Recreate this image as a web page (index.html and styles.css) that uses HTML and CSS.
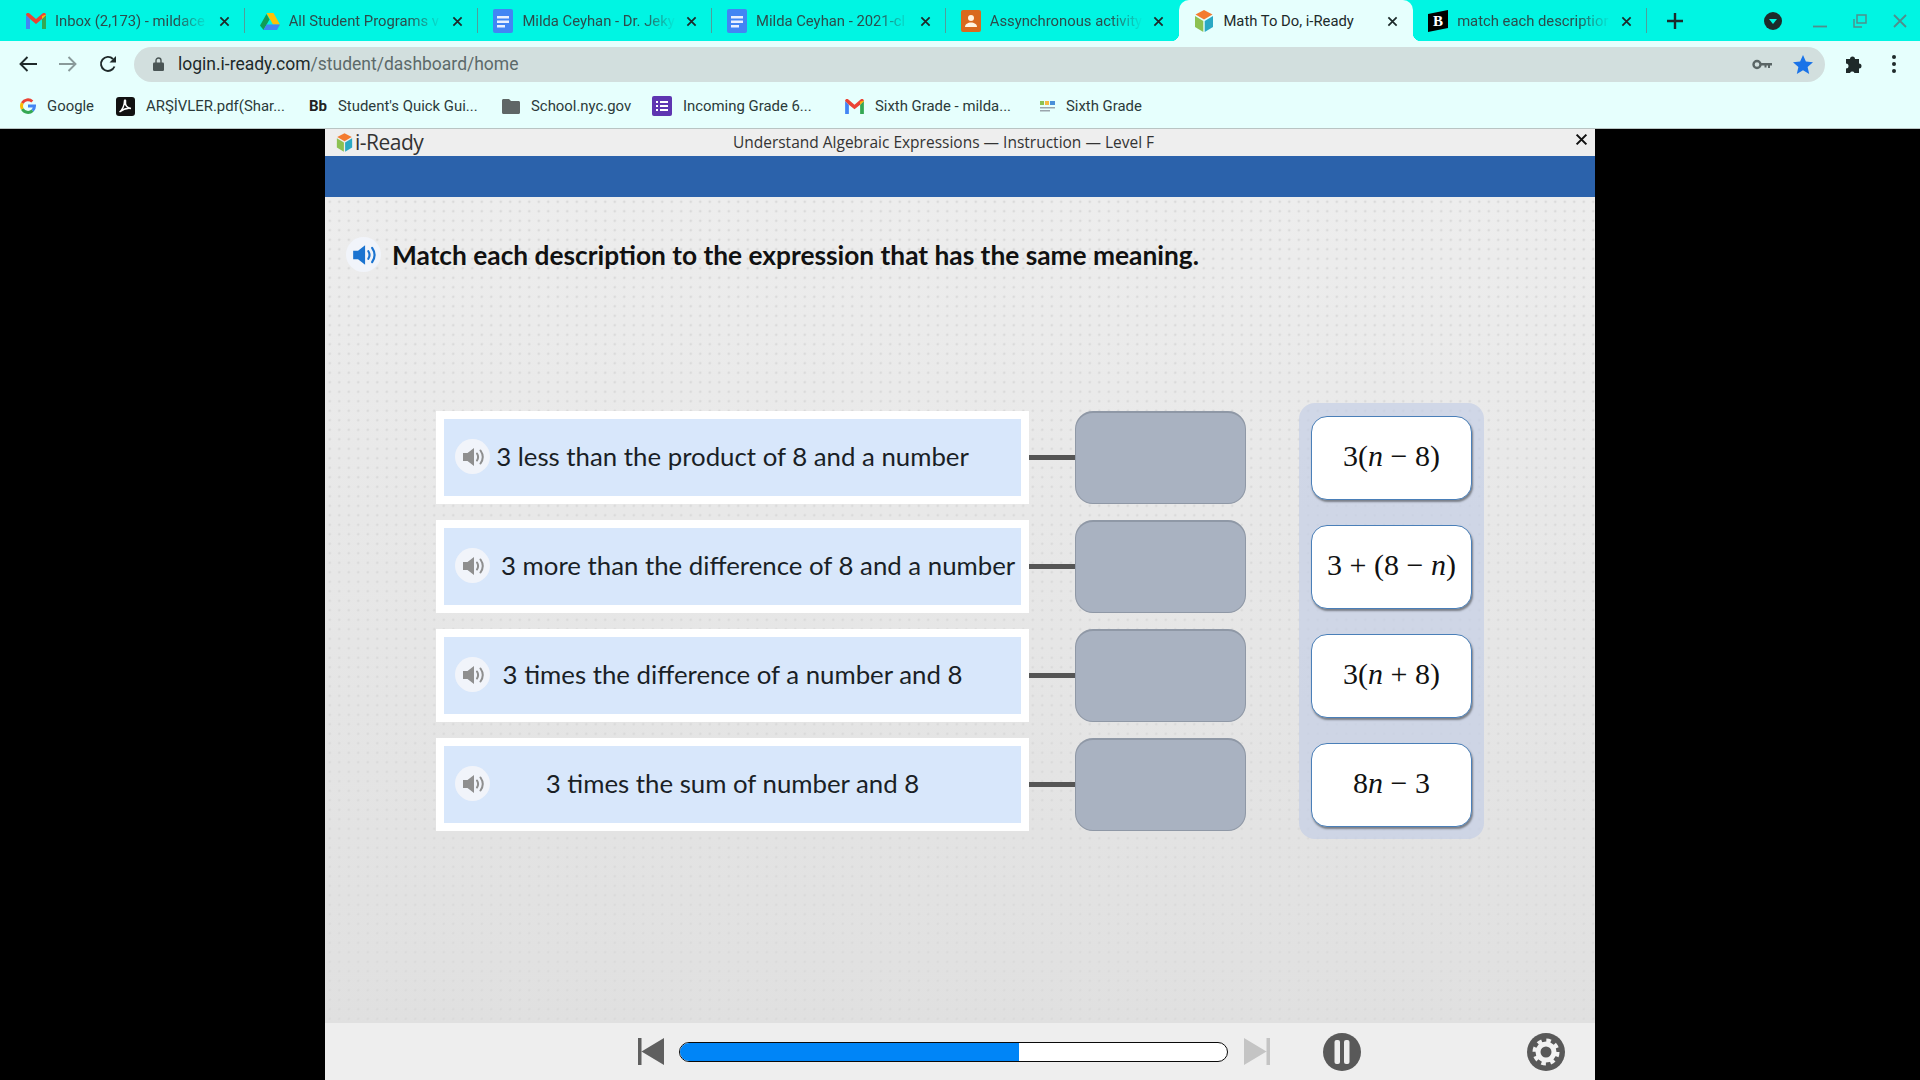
FILE: index.html
```html
<!DOCTYPE html>
<html lang="en">
<head>
    <meta charset="utf-8" />
    <title>Math To Do, i-Ready</title>
    <link rel="stylesheet" href="styles.css">
</head>
<body>
    <svg class="sprites" width="0" height="0">
        <symbol id="speaker" viewBox="0 0 24 24">
            <path fill="currentColor" d="M2 8h4.500L13 3v18l-6.500-5H2z" />
            <path fill="none" stroke="currentColor" stroke-width="2" stroke-linecap="round" d="M16 8.500c1.400 2.200 1.400 4.800 0 7M19.500 5.500c2.800 4 2.800 9 0 13" />
        </symbol>
        <symbol id="close" viewBox="0 0 12 12">
            <path fill="none" stroke="currentColor" stroke-width="1.900" d="M1.500 1.500l9 9M10.500 1.500l-9 9" />
        </symbol>
        <symbol id="doc" viewBox="0 0 20 24">
            <rect width="20" height="24" rx="2" fill="#4285f4" />
            <path fill="#e8f0fe" d="M4 7h12v2.400H4zM4 11.500h12v2.400H4zM4 16h8v2.400H4z" />
        </symbol>
        <symbol id="gmail" viewBox="0 0 20 16">
            <path fill="#4285f4" d="M0 16h4V6L0 2z" />
            <path fill="#34a853" d="M16 16h4V2l-4 4z" />
            <path fill="#ea4335" d="M0 2c0-2 2-2.500 3.500-1.500L10 6l6.500-5.500C18-.5 20 0 20 2l-4 4-6 5-6-5z" />
            <path fill="#fbbc04" d="M16 6l4-4v-.5L16 3z" />
        </symbol>
        <symbol id="cube" viewBox="0 0 20 22">
            <path fill="#f47b30" d="M10 0l8.500 4.500L10 9.500 1.500 4.500z" />
            <path fill="#8cc152" d="M1 6l8.300 5v11L1 17z" />
            <path fill="#2aa9c4" d="M19 6l-8.300 5v11l8.300-5z" />
        </symbol>
    </svg>

    <header class="tabstrip">
        <div class="tab">
            <svg class="favicon" width="20" height="16"><use href="#gmail" /></svg>
            <span class="tab-title">Inbox (2,173) - mildace</span>
            <svg class="tab-close" width="11" height="11"><use href="#close" /></svg>
        </div>
        <div class="tab">
            <svg class="favicon" width="20" height="18" viewBox="0 0 20 18">
                <path fill="#0f9d58" d="M0 13.500L6.500 2l3 5.500L3.500 18z" />
                <path fill="#ffc107" d="M6.500 1h7l6.500 11.500h-7z" />
                <path fill="#4285f4" d="M3.500 18l3-5.500H20L17 18z" />
            </svg>
            <span class="tab-title">All Student Programs v</span>
            <svg class="tab-close" width="11" height="11"><use href="#close" /></svg>
        </div>
        <div class="tab">
            <svg class="favicon" width="20" height="24"><use href="#doc" /></svg>
            <span class="tab-title">Milda Ceyhan - Dr. Jeky</span>
            <svg class="tab-close" width="11" height="11"><use href="#close" /></svg>
        </div>
        <div class="tab">
            <svg class="favicon" width="20" height="24"><use href="#doc" /></svg>
            <span class="tab-title">Milda Ceyhan - 2021-cl</span>
            <svg class="tab-close" width="11" height="11"><use href="#close" /></svg>
        </div>
        <div class="tab tab-nosep">
            <svg class="favicon" width="20" height="22" viewBox="0 0 20 22">
                <rect width="20" height="22" rx="2" fill="#d9691e" />
                <circle cx="10" cy="8" r="3" fill="#fff3e0" />
                <path fill="#fff3e0" d="M4 17c0-3 3-4.500 6-4.500s6 1.500 6 4.500z" />
            </svg>
            <span class="tab-title">Assynchronous activity</span>
            <svg class="tab-close" width="11" height="11"><use href="#close" /></svg>
        </div>
        <div class="tab tab-active">
            <svg class="favicon" width="20" height="22"><use href="#cube" /></svg>
            <span class="tab-title">Math To Do, i-Ready</span>
            <svg class="tab-close" width="11" height="11"><use href="#close" /></svg>
        </div>
        <div class="tab">
            <svg class="favicon" width="20" height="22" viewBox="0 0 20 22">
                <path fill="#000" d="M0 4l20-4v18L0 22z" />
                <text x="5" y="16" class="brand-b">B</text>
            </svg>
            <span class="tab-title">match each descriptior</span>
            <svg class="tab-close" width="11" height="11"><use href="#close" /></svg>
        </div>
        <svg class="new-tab" width="16" height="16" viewBox="0 0 16 16">
            <path stroke="#1c2b2b" stroke-width="2.400" d="M8 0v16M0 8h16" />
        </svg>
        <div class="window-controls">
            <svg class="win-menu" width="18" height="18" viewBox="0 0 18 18">
                <circle cx="9" cy="9" r="9" fill="#1d2a2a" />
                <path fill="#00f5e3" d="M5 7h8l-4 5z" />
            </svg>
            <svg class="win-min" width="14" height="14" viewBox="0 0 14 14">
                <path stroke="#4f8f8c" stroke-width="1.800" d="M0 12.500h14" />
            </svg>
            <svg width="14" height="14" viewBox="0 0 14 14">
                <path fill="none" stroke="#4f8f8c" stroke-width="1.500" d="M4 1h9v8H4zM1 5v8h8" />
            </svg>
            <svg width="14" height="14" viewBox="0 0 14 14">
                <path stroke="#4f8f8c" stroke-width="1.800" d="M1 1l12 12M13 1L1 13" />
            </svg>
        </div>
    </header>

    <nav class="toolbar">
        <svg class="nav-btn" width="18" height="16" viewBox="0 0 18 16">
            <path fill="none" stroke="#1f2a2a" stroke-width="1.900" d="M18 8H2M8.500 1L1.500 8l7 7" />
        </svg>
        <svg class="nav-btn" width="18" height="16" viewBox="0 0 18 16">
            <path fill="none" stroke="#8a9a9a" stroke-width="1.900" d="M0 8h16M9.500 1l7 7-7 7" />
        </svg>
        <svg class="nav-btn" width="18" height="18" viewBox="0 0 18 18">
            <path fill="none" stroke="#1f2a2a" stroke-width="1.900" d="M15.500 11.500A7 7 0 1 1 14 4" />
            <path fill="#1f2a2a" d="M17 1v6.500h-6.500z" />
        </svg>
        <div class="omnibox">
            <svg class="lock" width="11" height="14" viewBox="0 0 11 14">
                <path fill="none" stroke="#4a5555" stroke-width="1.400" d="M3 6V3.500a2.500 2.500 0 0 1 5 0V6" />
                <rect y="5.500" width="11" height="8.500" rx="1.200" fill="#4a5555" />
            </svg>
            <span class="url">login.i-ready.com<span class="url-path">/student/dashboard/home</span></span>
            <svg class="key" width="20" height="11" viewBox="0 0 20 11">
                <circle cx="5" cy="5.500" r="3.500" fill="none" stroke="#5a6565" stroke-width="2.400" />
                <path fill="#5a6565" d="M8 4h12v2.600h-2V9h-2V6.600h-1.500V8.500h-2V6.600H8z" />
            </svg>
            <svg class="star" width="20" height="19" viewBox="0 0 20 19">
                <path fill="#1a73e8" d="M10 0l2.900 6.500 7.100.7-5.400 4.700 1.600 7L10 15.200 3.800 18.900l1.600-7L0 7.200l7.100-.7z" />
            </svg>
        </div>
        <svg class="puzzle" width="18" height="18" viewBox="0 0 18 18">
            <path fill="#1f2a2a" d="M2 4h4a2.500 2.500 0 0 1 5 0h4v4.500a2.500 2.500 0 0 1 0 5V18h-4.500a2.500 2.500 0 0 0-4.500 0H2v-4.500a2.500 2.500 0 0 0 0-5z" />
        </svg>
        <svg class="dots" width="4" height="18" viewBox="0 0 4 18">
            <circle cx="2" cy="2" r="2" fill="#1f2a2a" />
            <circle cx="2" cy="9" r="2" fill="#1f2a2a" />
            <circle cx="2" cy="16" r="2" fill="#1f2a2a" />
        </svg>
    </nav>

    <nav class="bookmarks">
        <div class="bookmark bm-google">
            <svg width="16" height="16" viewBox="0 0 16 16">
                <path fill="none" stroke="#4285f4" stroke-width="3" d="M8 8h6.500a6.500 6.500 0 0 1-2 4.600" />
                <path fill="none" stroke="#34a853" stroke-width="3" d="M12.500 12.600A6.500 6.500 0 0 1 2.300 11" />
                <path fill="none" stroke="#fbbc04" stroke-width="3" d="M2.300 11a6.500 6.500 0 0 1 0-6" />
                <path fill="none" stroke="#ea4335" stroke-width="3" d="M2.300 5a6.500 6.500 0 0 1 10-1.500" />
            </svg>
            <span>Google</span>
        </div>
        <div class="bookmark bm-pdf">
            <svg width="19" height="19" viewBox="0 0 19 19">
                <rect width="19" height="19" rx="3" fill="#111" />
                <path fill="none" stroke="#fff" stroke-width="1.500" d="M3.500 15c3-2 5-7 5-11 0-1.500 1.500-1 1 1-.5 3.500 2 6 5.500 6.500-3-.5-7 0-11.500 3.500z" />
            </svg>
            <span>ARŞİVLER.pdf(Shar...</span>
        </div>
        <div class="bookmark bm-bb">
            <b class="bb-mark">Bb</b>
            <span>Student's Quick Gui...</span>
        </div>
        <div class="bookmark bm-folder">
            <svg width="18" height="15" viewBox="0 0 18 15">
                <path fill="#5f6666" d="M0 1.500C0 .6.600 0 1.500 0H7l2 2h7.500c.9 0 1.500.6 1.500 1.500v10c0 .9-.6 1.500-1.500 1.500h-15C.6 15 0 14.400 0 13.500z" />
            </svg>
            <span>School.nyc.gov</span>
        </div>
        <div class="bookmark bm-forms">
            <svg width="20" height="20" viewBox="0 0 20 20">
                <rect width="20" height="20" rx="2" fill="#5e35b1" />
                <path fill="#fff" d="M4 5h2v2H4zM8 5h8v2H8zM4 9h2v2H4zM8 9h8v2H8zM4 13h2v2H4zM8 13h8v2H8z" />
            </svg>
            <span>Incoming Grade 6...</span>
        </div>
        <div class="bookmark bm-gmail">
            <svg width="19" height="15"><use href="#gmail" /></svg>
            <span>Sixth Grade - milda...</span>
        </div>
        <div class="bookmark bm-sixth">
            <svg width="15" height="11" viewBox="0 0 15 11">
                <path fill="#8cc152" d="M0 0h4v4H0z" />
                <path fill="#f4b942" d="M5 0h4v4H5z" />
                <path fill="#4a90d9" d="M10 0h5v4h-5z" />
                <path fill="#9aa5ad" d="M0 6h15v1.500H0zM0 9h10v1.500H0z" />
            </svg>
            <span>Sixth Grade</span>
        </div>
    </nav>

    <div class="stage">
        <main class="app">
            <div class="app-title">
                <div class="brand">
                    <svg width="17" height="19"><use href="#cube" /></svg>
                    <span>i-Ready</span>
                </div>
                <span class="lesson">Understand Algebraic Expressions — Instruction — Level F</span>
                <svg class="app-close" width="13" height="13"><use href="#close" /></svg>
            </div>
            <div class="app-band"></div>

            <section class="lesson-body">
                <div class="prompt">
                    <span class="voice voice-main"><svg width="26" height="26"><use href="#speaker" /></svg></span>
                    <h1>Match each description to the expression that has the same meaning.</h1>
                </div>

                <div class="match">
                    <div class="pairs">
                        <div class="pair">
                            <div class="desc">
                                <div class="desc-inner">
                                    <span class="voice"><svg width="24" height="24"><use href="#speaker" /></svg></span>
                                    <span>3 less than the product of 8 and a number</span>
                                </div>
                            </div>
                            <div class="connector"></div>
                            <div class="slot"></div>
                        </div>
                        <div class="pair">
                            <div class="desc">
                                <div class="desc-inner desc-long">
                                    <span class="voice"><svg width="24" height="24"><use href="#speaker" /></svg></span>
                                    <span>3 more than the difference of 8 and a number</span>
                                </div>
                            </div>
                            <div class="connector"></div>
                            <div class="slot"></div>
                        </div>
                        <div class="pair">
                            <div class="desc">
                                <div class="desc-inner">
                                    <span class="voice"><svg width="24" height="24"><use href="#speaker" /></svg></span>
                                    <span>3 times the difference of a number and 8</span>
                                </div>
                            </div>
                            <div class="connector"></div>
                            <div class="slot"></div>
                        </div>
                        <div class="pair">
                            <div class="desc">
                                <div class="desc-inner">
                                    <span class="voice"><svg width="24" height="24"><use href="#speaker" /></svg></span>
                                    <span>3 times the sum of number and 8</span>
                                </div>
                            </div>
                            <div class="connector"></div>
                            <div class="slot"></div>
                        </div>
                    </div>

                    <div class="tray">
                        <div class="chip">3(<i>n</i> − 8)</div>
                        <div class="chip">3 + (8 − <i>n</i>)</div>
                        <div class="chip">3(<i>n</i> + 8)</div>
                        <div class="chip">8<i>n</i> − 3</div>
                    </div>
                </div>
            </section>

            <footer class="controls">
                <svg class="skip" width="26" height="27" viewBox="0 0 26 27">
                    <path fill="#5f5f5f" d="M0 0h3.500v27H0zM26 0v27L3.500 13.500z" />
                </svg>
                <div class="progress"><div class="progress-fill"></div></div>
                <svg class="skip" width="26" height="27" viewBox="0 0 26 27">
                    <path fill="#c4c4c4" d="M26 0h-3.500v27H26zM0 0v27l22.500-13.500z" />
                </svg>
                <svg class="pause" width="38" height="38" viewBox="0 0 38 38">
                    <circle cx="19" cy="19" r="19" fill="#595959" />
                    <rect x="11.500" y="7" width="5.500" height="24" rx="2" fill="#eee" />
                    <rect x="21" y="7" width="5.500" height="24" rx="2" fill="#eee" />
                </svg>
                <svg class="gear" width="38" height="38" viewBox="0 0 38 38">
                    <circle cx="19" cy="19" r="19" fill="#595959" />
                    <circle cx="19" cy="19" r="11.500" fill="none" stroke="#f2f2f2" stroke-width="4" stroke-dasharray="4.500 4.530" />
                    <circle cx="19" cy="19" r="8" fill="none" stroke="#f2f2f2" stroke-width="5" />
                </svg>
            </footer>
        </main>
    </div>
</body>
</html>
```

FILE: styles.css
```css
/* Global */
html, body {
    margin: 0;
    height: 100%;
}

body {
    width: 1920px;
    height: 1080px;
    overflow: hidden;
    display: flex;
    flex-direction: column;
    font-family: Roboto, sans-serif;
    background-color: #000;
}

.sprites {
    position: absolute;
}

/* Tab strip */
.tabstrip {
    height: 41px;
    flex: none;
    display: flex;
    align-items: center;
    padding-left: 11px;
    background-color: #00f5e3;
}

.tab {
    position: relative;
    box-sizing: border-box;
    width: 233.7px;
    height: 41px;
    flex: none;
    display: flex;
    align-items: center;
    padding: 1px 15px 0 15px;
    color: #2c4c4c;
    font-size: 14.8px;
}

.tab::after {
    content: "";
    position: absolute;
    right: 0;
    top: 8px;
    height: 25px;
    width: 1px;
    background-color: #4f9f9a;
}

.tab-nosep::after {
    display: none;
}

.tab-active {
    background-color: #e6fffd;
    border-radius: 10px 10px 0 0;
    color: #1d2a2a;
}

.tab-active::before,
.tab-active::after {
    content: "";
    position: absolute;
    top: auto;
    bottom: 0;
    width: 8px;
    height: 8px;
}

.tab-active::before {
    left: -8px;
    background: radial-gradient(circle at 0 0, transparent 8px, #e6fffd 8.5px);
}

.tab-active::after {
    right: -8px;
    background: radial-gradient(circle at 100% 0, transparent 8px, #e6fffd 8.5px);
}

.favicon {
    flex: none;
    margin-right: 9px;
}

.tab-title {
    flex: 1;
    overflow: hidden;
    white-space: nowrap;
    -webkit-mask-image: linear-gradient(to right, #000 78%, transparent 100%);
    mask-image: linear-gradient(to right, #000 78%, transparent 100%);
}

.tab-active .tab-title {
    -webkit-mask-image: none;
    mask-image: none;
}

.tab-close {
    flex: none;
    margin-left: 10px;
    color: #1d2a2a;
}

.brand-b {
    font-family: "Liberation Serif", serif;
    font-weight: 700;
    font-size: 15px;
    fill: #fff;
}

.new-tab {
    margin-left: 20px;
}

.window-controls {
    margin-left: auto;
    display: flex;
    align-items: center;
    gap: 26px;
    padding-right: 13px;
}

.win-menu {
    margin-right: 5px;
}

/* Address bar */
.toolbar {
    height: 46px;
    flex: none;
    display: flex;
    align-items: center;
    padding: 0 0 0 19px;
    background-color: #e6fffd;
}

.nav-btn {
    flex: none;
    margin-right: 22px;
}

.omnibox {
    box-sizing: border-box;
    width: 1691px;
    height: 35px;
    margin: 0 0 0 -5px;
    display: flex;
    align-items: center;
    padding: 0 12px 0 19px;
    border-radius: 18px;
    background-color: #d2dfde;
}

.lock {
    margin-right: 14px;
}

.url {
    flex: 1;
    font-size: 17.500px;
    color: #1d2a2a;
}

.url-path {
    color: #5c6a6a;
}

.key {
    margin-right: 21px;
}

.puzzle {
    margin-left: 19px;
}

.dots {
    margin-left: 30px;
}

/* Bookmarks */
.bookmarks {
    box-sizing: border-box;
    height: 42px;
    flex: none;
    display: flex;
    align-items: center;
    padding-left: 20px;
    padding-bottom: 3px;
    border-bottom: 1px solid #b9c4c3;
    background-color: #e6fffd;
    color: #2b3a3a;
    font-size: 14.9px;
}

.bookmark {
    display: flex;
    align-items: center;
    gap: 11px;
    white-space: nowrap;
}

.bb-mark {
    font-size: 15px;
    color: #222;
}

.bm-google { width: 96px; }
.bm-pdf { width: 193px; }
.bm-bb { width: 193px; }
.bm-folder { width: 150px; }
.bm-forms { width: 193px; }
.bm-gmail { width: 195px; }

/* Lesson player */
.stage {
    flex: 1;
    display: flex;
    justify-content: center;
    min-height: 0;
}

.app {
    width: 1270px;
    display: flex;
    flex-direction: column;
    background-color: #eee;
}

.app-title {
    position: relative;
    height: 27px;
    flex: none;
    display: flex;
    align-items: center;
    justify-content: center;
    font-family: "Open Sans", sans-serif;
    font-size: 15.500px;
    color: #333;
    background-color: #eee;
}

.brand {
    position: absolute;
    left: 11px;
    top: -1px;
    display: flex;
    align-items: center;
    gap: 2px;
    font-size: 21px;
    letter-spacing: -0.5px;
    color: #333;
}

.lesson {
    margin-left: -33px;
    margin-bottom: 1px;
}

.app-close {
    position: absolute;
    right: 7px;
    top: 4px;
    color: #111;
}

.app-band {
    height: 41px;
    flex: none;
    background-color: #2b62ab;
}

.lesson-body {
    flex: 1;
    background-color: #e8e8e8;
    background-image:
        radial-gradient(circle, #dadada 1.2px, transparent 1.6px),
        linear-gradient(to bottom, #ededed, #e0e0e0);
    background-size: 9.500px 9.500px, 100% 100%;
}

.prompt {
    display: flex;
    align-items: center;
    padding: 40px 0 0 21px;
}

.prompt h1 {
    margin: 0 0 0 11px;
    font-family: Lato, sans-serif;
    font-size: 26.300px;
    font-weight: 700;
    color: #111;
}

.voice {
    width: 35px;
    height: 35px;
    flex: none;
    display: flex;
    align-items: center;
    justify-content: center;
    border-radius: 50%;
    background-color: #f1f4fa;
    color: #8f8f8f;
}

.voice-main {
    color: #1a73d0;
}

/* Matching area */
.match {
    display: flex;
    align-items: flex-start;
    margin: 131px 0 0 111px;
}

.pairs {
    display: flex;
    flex-direction: column;
    gap: 16px;
    margin-top: 8px;
}

.pair {
    display: flex;
    align-items: center;
    height: 93px;
}

.desc {
    box-sizing: border-box;
    width: 593px;
    height: 93px;
    padding: 8px;
    background-color: #fff;
}

.desc-inner {
    box-sizing: border-box;
    position: relative;
    height: 100%;
    display: flex;
    align-items: center;
    justify-content: center;
    padding-bottom: 3px;
    font-family: Lato, sans-serif;
    font-size: 25.800px;
    color: #1a1f26;
    background-color: #d8e7fb;
    white-space: nowrap;
}

.desc-inner .voice {
    position: absolute;
    left: 11px;
    top: 20px;
}

.desc-long {
    justify-content: flex-start;
    padding-left: 57px;
}

.connector {
    width: 46px;
    height: 5px;
    flex: none;
    background-color: #555;
}

.slot {
    box-sizing: border-box;
    width: 171px;
    height: 93px;
    flex: none;
    border: 1px solid #8f98a6;
    border-top-width: 2px;
    border-radius: 18px;
    background-color: #a9b2c1;
}

.tray {
    box-sizing: border-box;
    width: 185px;
    display: flex;
    flex-direction: column;
    gap: 25px;
    margin-left: 53px;
    padding: 13px 12px 12px;
    border-radius: 16px;
    background-color: rgba(196, 207, 230, 0.7);
}

.chip {
    box-sizing: border-box;
    height: 84px;
    display: flex;
    align-items: center;
    justify-content: center;
    padding-bottom: 4px;
    border: 1px solid #4a7fb8;
    border-radius: 16px;
    background-color: #fff;
    box-shadow: 1px 2px 2px #7a7f88;
    font-family: "Liberation Serif", serif;
    font-size: 30px;
    color: #111;
    white-space: pre;
}

/* Bottom controls */
.controls {
    height: 57px;
    flex: none;
    display: flex;
    align-items: center;
    padding-left: 313px;
    background-color: #eee;
}

.progress {
    box-sizing: border-box;
    width: 549px;
    height: 20px;
    margin: 0 16px 0 15px;
    overflow: hidden;
    border: 1.5px solid #0a0a0a;
    border-radius: 10px;
    background-color: #fff;
}

.progress-fill {
    width: 62%;
    height: 100%;
    background-color: #0085f7;
}

.pause {
    margin-left: 53px;
}

.gear {
    margin-left: 166px;
}
```
